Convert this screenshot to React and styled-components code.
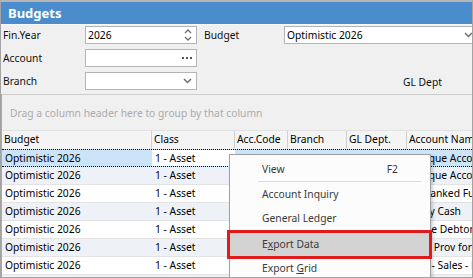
import React from 'react'
import styled, { createGlobalStyle } from 'styled-components'

const GlobalStyle = createGlobalStyle`
  html, body {
    margin: 0;
    padding: 0;
    background: #ffffff;
  }
  body {
    font-family: "Noto Sans", "Liberation Sans", sans-serif;
    font-size: 10.3px;
    color: #000;
  }
`

const columns = [
  { key: 'budget', title: 'Budget', width: 150 },
  { key: 'cls', title: 'Class', width: 83 },
  { key: 'code', title: 'Acc.Code', width: 53 },
  { key: 'branch', title: 'Branch', width: 59 },
  { key: 'dept', title: 'GL Dept.', width: 60 },
  { key: 'name', title: 'Account Name', width: 110 },
]

const rows = [
  { budget: 'Optimistic 2026', cls: '1 - Asset', code: '1-1110', name: 'Cheque Account' },
  { budget: 'Optimistic 2026', cls: '1 - Asset', code: '1-1120', name: 'Cheque Account' },
  { budget: 'Optimistic 2026', cls: '1 - Asset', code: '1-1130', name: 'Unbanked Funds' },
  { budget: 'Optimistic 2026', cls: '1 - Asset', code: '1-1140', name: 'Petty Cash' },
  { budget: 'Optimistic 2026', cls: '1 - Asset', code: '1-1200', name: 'Trade Debtors' },
  { budget: 'Optimistic 2026', cls: '1 - Asset', code: '1-1210', name: 'Less Prov for Doubtful' },
  { budget: 'Optimistic 2026', cls: '1 - Asset', code: '1-1300', name: 'GST - Sales - Paid' },
  { budget: 'Optimistic 2026', cls: '1 - Asset', code: '1-1310', name: 'Stock on Hand' },
]

function Spinner() {
  return (
    <svg width="8" height="14" viewBox="0 0 8 14" fill="none" stroke="#6e6e6e" strokeWidth="1.3">
      <path d="M1 5 L4 2 L7 5" />
      <path d="M1 9 L4 12 L7 9" />
    </svg>
  )
}

function Chevron() {
  return (
    <svg width="9" height="6" viewBox="0 0 9 6" fill="none" stroke="#6e6e6e" strokeWidth="1.5">
      <path d="M1 1 L4.5 4.5 L8 1" />
    </svg>
  )
}

function Dots() {
  return (
    <svg width="10" height="3" viewBox="0 0 10 3" fill="#555">
      <rect x="0" y="0" width="2" height="2" />
      <rect x="4" y="0" width="2" height="2" />
      <rect x="8" y="0" width="2" height="2" />
    </svg>
  )
}

function App() {
  return (
    <>
      <GlobalStyle />
      <Frame>
        <TitleBar>Budgets</TitleBar>
        <Form>
          <Label>Fin.Year</Label>
          <Field>
            <FieldText>2026</FieldText>
            <Spinner />
          </Field>
          <span />
          <Label>Budget</Label>
          <Field $wide>
            <FieldText>Optimistic 2026</FieldText>
            <Chevron />
          </Field>

          <Label>Account</Label>
          <Field>
            <FieldText />
            <Dots />
          </Field>
          <span />
          <span />
          <span />

          <Label>Branch</Label>
          <Field>
            <FieldText />
            <Chevron />
          </Field>
          <span />
          <span />
          <SideLabel>GL Dept</SideLabel>
        </Form>

        <Grid>
          <GroupPanel>Drag a column header here to group by that column</GroupPanel>
          <HeaderRow>
            {columns.map((c) => (
              <HeaderCell key={c.key} style={{ width: c.width }}>
                {c.title}
              </HeaderCell>
            ))}
          </HeaderRow>
          {rows.map((r, i) => (
            <Row key={i} $alt={i % 2 === 1} $focused={i === 0}>
              {columns.map((c) => (
                <Cell
                  key={c.key}
                  style={{ width: c.width }}
                  $focusedCell={i === 0 && c.key === 'cls'}
                >
                  {r[c.key]}
                </Cell>
              ))}
            </Row>
          ))}
        </Grid>

        <Menu>
          <MenuItem>
            <span>View</span>
            <Shortcut>F2</Shortcut>
          </MenuItem>
          <MenuSeparator />
          <MenuItem>Account Inquiry</MenuItem>
          <MenuItem>General Ledger</MenuItem>
          <MenuItem $highlighted>
            <span>
              E<u>x</u>port Data
            </span>
          </MenuItem>
          <MenuItem>
            <span>
              Export <u>G</u>rid
            </span>
          </MenuItem>
        </Menu>
      </Frame>
    </>
  )
}

export default App

const Frame = styled.div`
  position: relative;
  width: 473px;
  height: 278px;
  box-sizing: border-box;
  border: 1px solid #a3a3a3;
  border-top: 2px solid #b5b5b5;
  background: #f0f0f0;
  overflow: hidden;
  display: flex;
  flex-direction: column;
`

const TitleBar = styled.div`
  height: 22px;
  flex: none;
  background: #4b8dcc;
  color: #ffffff;
  font-weight: bold;
  font-size: 13px;
  padding-left: 7px;
  display: flex;
  align-items: center;
  border-bottom: 1px solid #f7f7f7;
`

const Form = styled.div`
  display: grid;
  grid-template-columns: 82px 112px 7px 80px 200px;
  grid-auto-rows: 18px;
  row-gap: 5px;
  padding: 1px 0 4px 2px;
  align-items: center;
`

const Label = styled.div`
  font-size: 10.3px;
  color: #111;
  white-space: nowrap;
`

const SideLabel = styled(Label)`
  padding-left: 119px;
  padding-top: 1px;
`

const Field = styled.div`
  height: 18px;
  box-sizing: border-box;
  background: #ffffff;
  border: 1px solid #b4b4b4;
  display: flex;
  align-items: center;
  padding: 0 4px 0 2px;
  width: ${(p) => (p.$wide ? '194px' : 'auto')};
`

const FieldText = styled.span`
  flex: 1;
  font-size: 10.3px;
  white-space: nowrap;
`

const Grid = styled.div`
  flex: 1;
  background: #ffffff;
  border-left: 1px solid #a9a9a9;
`

const GroupPanel = styled.div`
  height: 36px;
  box-sizing: border-box;
  border-top: 1px solid #cdcdcd;
  background: #f0f0f0;
  color: #ababab;
  font-size: 10.3px;
  padding-left: 8px;
  display: flex;
  align-items: center;
  white-space: nowrap;
`

const HeaderRow = styled.div`
  display: flex;
  height: 18px;
  background: #f4f4f4;
  border-top: 1px solid #e2e2e2;
`

const HeaderCell = styled.div`
  flex: none;
  box-sizing: border-box;
  padding-left: 2px;
  border-right: 1px solid #cfcfcf;
  font-size: 10.3px;
  line-height: 17px;
  white-space: nowrap;
  overflow: hidden;
`

const Row = styled.div`
  display: flex;
  height: 18px;
  box-sizing: border-box;
  background: ${(p) => (p.$focused ? '#cce4f7' : p.$alt ? '#eef2f8' : '#ffffff')};
  border-bottom: 1px solid #e3e3e3;
  ${(p) =>
    p.$focused &&
    `
    border-top: 1px dotted #000;
    border-bottom: 1px dotted #000;
  `}
`

const Cell = styled.div`
  flex: none;
  box-sizing: border-box;
  padding-left: 3px;
  font-size: 10.3px;
  line-height: 17px;
  white-space: nowrap;
  overflow: hidden;
  background: ${(p) => (p.$focusedCell ? '#ffffff' : 'transparent')};
`

const Menu = styled.div`
  position: absolute;
  left: 228px;
  top: 152px;
  width: 202px;
  height: 140px;
  box-sizing: border-box;
  background: #fcfcfc;
  border: 1px solid #a0a0a0;
  box-shadow: 2px 2px 3px rgba(0, 0, 0, 0.18);
  padding-top: 2px;
`

const MenuItem = styled.div`
  position: relative;
  height: 24px;
  display: flex;
  align-items: center;
  justify-content: space-between;
  padding: 0 32px 0 32px;
  color: #3a3a3a;
  font-size: 10.3px;
  white-space: nowrap;
  ${(p) =>
    p.$highlighted &&
    `
    margin-top: 2px;
    background: #d3d3d3;
    &::after {
      content: "";
      position: absolute;
      top: -2px;
      bottom: -3px;
      left: -3px;
      right: -2px;
      border: 3px solid #e01b1b;
    }
  `}
`

const Shortcut = styled.span`
  color: #3a3a3a;
`

const MenuSeparator = styled.div`
  height: 1px;
  background: #d9d9d9;
  margin: 0 9px 0 28px;
`
